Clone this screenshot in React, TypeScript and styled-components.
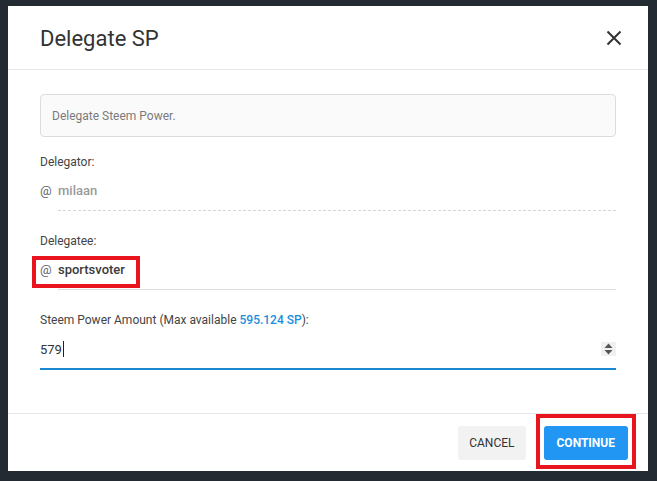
import React from "react";
import styled, { createGlobalStyle } from "styled-components";

const Global = createGlobalStyle`
  html, body { margin: 0; padding: 0; background: #232a32; }
  body { font-family: Roboto, "Liberation Sans", Arial, sans-serif; }
  * { box-sizing: border-box; }
`;

const Page = styled.div`
  width: 657px;
  height: 481px;
  background: #232a32;
  padding: 6px 9px 0 8px;
  overflow: hidden;
`;

const Modal = styled.div`
  width: 640px;
  height: 465px;
  background: #fff;
  display: flex;
  flex-direction: column;
`;

const Header = styled.div`
  height: 64px;
  flex: none;
  display: flex;
  align-items: center;
  justify-content: space-between;
  padding: 0 26px 0 32px;
  border-bottom: 1px solid #e6e6e6;
`;

const Title = styled.h2`
  margin: 0;
  font-size: 22px;
  font-weight: 400;
  color: #333;
  padding-top: 1px;
`;

const Close = styled.button`
  border: 0;
  background: none;
  padding: 0;
  width: 16px;
  height: 16px;
  display: flex;
  cursor: pointer;
`;

const Body = styled.div`
  flex: 1;
  padding: 24px 32px 0 32px;
  border-bottom: 1px solid #e6e6e6;
`;

const InfoBox = styled.div`
  height: 43px;
  border: 1px solid #dcdcdc;
  border-radius: 4px;
  background: #fafafa;
  padding: 0 11px;
  display: flex;
  align-items: center;
  font-size: 12px;
  color: #7a7a7a;
`;

const Label = styled.div<{ $gap: number }>`
  margin-top: ${(p) => p.$gap}px;
  height: 16px;
  line-height: 16px;
  font-size: 12px;
  color: #444;
`;

const Link = styled.span`
  color: #1a8ee0;
  font-weight: 500;
`;

const InputRow = styled.div`
  position: relative;
  display: flex;
  align-items: stretch;
  height: 41px;
`;

const At = styled.span`
  width: 18px;
  flex: none;
  display: flex;
  align-items: center;
  font-size: 13px;
  color: #666;
`;

const Field = styled.div<{ $variant: "disabled" | "normal" }>`
  flex: 1;
  display: flex;
  align-items: center;
  font-size: 13px;
  font-weight: 500;
  color: ${(p) => (p.$variant === "disabled" ? "#9a9a9a" : "#3a3a3a")};
  border-bottom: 1px ${(p) => (p.$variant === "disabled" ? "dashed #d6d6d6" : "solid #dcdcdc")};
`;

const AmountRow = styled.div`
  display: flex;
  align-items: center;
  height: 42px;
  padding-top: 2px;
  border-bottom: 2px solid #1a87d2;
  font-size: 13px;
  color: #333;
`;

const Caret = styled.span`
  display: inline-block;
  width: 1px;
  height: 16px;
  background: #222;
  margin-left: 1px;
`;

const Spinner = styled.span`
  margin-left: auto;
  width: 15px;
  height: 14px;
  background: #f0f0f0;
  display: flex;
  align-items: center;
  justify-content: center;
`;

const Highlight = styled.span<{ $t: number; $r: number; $b: number; $l: number }>`
  position: absolute;
  top: ${(p) => p.$t}px;
  right: ${(p) => p.$r}px;
  bottom: ${(p) => p.$b}px;
  left: ${(p) => p.$l}px;
  border: 4px solid #e8141e;
  pointer-events: none;
`;

const Footer = styled.div`
  height: 57px;
  flex: none;
  display: flex;
  justify-content: flex-end;
  align-items: flex-start;
  padding: 12px 20px 0 0;
  gap: 18px;
`;

const Button = styled.button<{ $primary?: boolean }>`
  position: relative;
  height: 34px;
  border: 0;
  border-radius: 3px;
  padding: 0 ${(p) => (p.$primary ? 13 : 11)}px;
  font-family: Roboto, "Liberation Sans", Arial, sans-serif;
  font-size: 12px;
  font-weight: ${(p) => (p.$primary ? 700 : 400)};
  color: ${(p) => (p.$primary ? "#fff" : "#333")};
  background: ${(p) => (p.$primary ? "#2196f3" : "#f2f2f2")};
  cursor: pointer;
`;

export default function App() {
  return (
    <>
      <Global />
      <Page>
        <Modal>
          <Header>
            <Title>Delegate SP</Title>
            <Close aria-label="close">
              <svg width="16" height="16" viewBox="0 0 16 16">
                <path d="M1.5 1.5 L14.5 14.5 M14.5 1.5 L1.5 14.5" stroke="#333" strokeWidth="2" />
              </svg>
            </Close>
          </Header>
          <Body>
            <InfoBox>Delegate Steem Power.</InfoBox>
            <Label $gap={17}>Delegator:</Label>
            <InputRow>
              <At>@</At>
              <Field $variant="disabled">milaan</Field>
            </InputRow>
            <Label $gap={22}>Delegatee:</Label>
            <InputRow>
              <At>@</At>
              <Field $variant="normal">sportsvoter</Field>
              <Highlight $t={7} $r={476} $b={2} $l={-8} />
            </InputRow>
            <Label $gap={22}>
              Steem Power Amount (Max available <Link>595.124 SP</Link>):
            </Label>
            <AmountRow>
              579
              <Caret />
              <Spinner>
                <svg width="9" height="12" viewBox="0 0 9 12">
                  <path d="M4.5 0.5 L8.5 5 L0.5 5 Z M0.5 7 L8.5 7 L4.5 11.5 Z" fill="#555" />
                </svg>
              </Spinner>
            </AmountRow>
          </Body>
          <Footer>
            <Button>CANCEL</Button>
            <Button $primary>
              CONTINUE
              <Highlight $t={-12} $r={-8} $b={-9} $l={-8} />
            </Button>
          </Footer>
        </Modal>
      </Page>
    </>
  );
}
